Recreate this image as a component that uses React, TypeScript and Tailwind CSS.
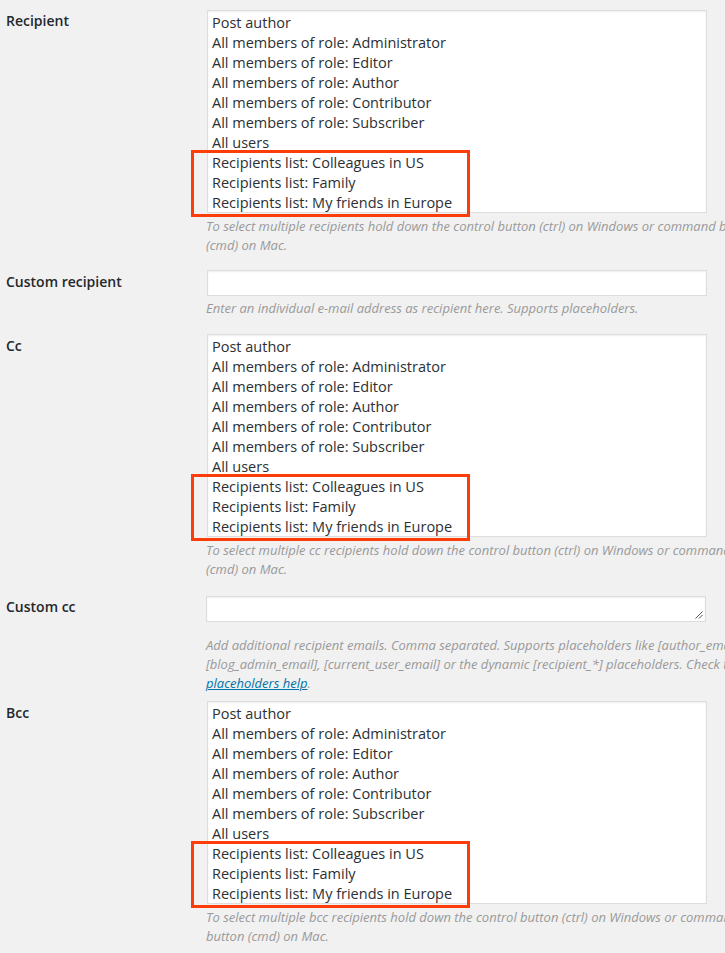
import React from "react";

const options = [
  "Post author",
  "All members of role: Administrator",
  "All members of role: Editor",
  "All members of role: Author",
  "All members of role: Contributor",
  "All members of role: Subscriber",
  "All users",
  "Recipients list: Colleagues in US",
  "Recipients list: Family",
  "Recipients list: My friends in Europe",
];

function Label({ children, pt }: { children: React.ReactNode; pt: string }) {
  return (
    <div className={`w-[206px] shrink-0 pl-[6px] font-semibold text-[14px] leading-[20px] text-[#23282d] ${pt}`}>
      {children}
    </div>
  );
}

function Help({ lines, className = "" }: { lines: React.ReactNode[]; className?: string }) {
  return (
    <div className={`italic text-[13px] leading-[19px] text-[#999999] whitespace-nowrap ${className}`}>
      {lines.map((l, i) => (
        <div key={i}>{l}</div>
      ))}
    </div>
  );
}

function RecipientSelect() {
  return (
    <div className="relative ml-[1px] w-[500px]">
      <div className="h-[203px] bg-white border border-[#dddddd] shadow-[inset_0_1px_2px_rgba(0,0,0,0.07)] pl-[4px] pt-[2px] text-[14.5px] leading-[20px] text-[#2c3034]">
        {options.map((o) => (
          <div key={o}>{o}</div>
        ))}
      </div>
      {/* highlight drawn over the recipients lists */}
      <div className="absolute left-[-16px] top-[140px] w-[279px] h-[67px] border-[3px] border-[#fc3d0a]" />
    </div>
  );
}

export default function App() {
  return (
    <div className="w-[725px] min-h-[953px] overflow-hidden bg-[#f1f1f1] font-['Open_Sans',sans-serif]">
      {/* Recipient */}
      <div className="flex pt-[10px]">
        <Label pt="pt-[1px]">Recipient</Label>
        <div>
          <RecipientSelect />
          <Help
            className="mt-[4px]"
            lines={[
              "To select multiple recipients hold down the control button (ctrl) on Windows or command button",
              "(cmd) on Mac.",
            ]}
          />
        </div>
      </div>

      {/* Custom recipient */}
      <div className="flex pt-[15px]">
        <Label pt="pt-[2px]">Custom recipient</Label>
        <div>
          <div className="ml-[1px] w-[500px] h-[26px] bg-white border border-[#dddddd] shadow-[inset_0_1px_2px_rgba(0,0,0,0.07)]" />
          <Help className="mt-[3px]" lines={["Enter an individual e-mail address as recipient here. Supports placeholders."]} />
        </div>
      </div>

      {/* Cc */}
      <div className="flex pt-[16px]">
        <Label pt="pt-[2px]">Cc</Label>
        <div>
          <RecipientSelect />
          <Help
            className="mt-[4px]"
            lines={[
              "To select multiple cc recipients hold down the control button (ctrl) on Windows or command button",
              "(cmd) on Mac.",
            ]}
          />
        </div>
      </div>

      {/* Custom cc */}
      <div className="flex pt-[17px]">
        <Label pt="pt-[1px]">Custom cc</Label>
        <div>
          <div className="relative w-[500px] h-[26px] bg-white border border-[#dddddd] shadow-[inset_0_1px_2px_rgba(0,0,0,0.07)]">
            <svg className="absolute right-[2px] bottom-[2px]" width="8" height="8" viewBox="0 0 8 8">
              <path d="M7.5 0.5L0.5 7.5M7.5 4L4 7.5" stroke="#555" strokeWidth="1" />
            </svg>
          </div>
          <Help
            className="mt-[14px]"
            lines={[
              "Add additional recipient emails. Comma separated. Supports placeholders like [author_email],",
              "[blog_admin_email], [current_user_email] or the dynamic [recipient_*] placeholders. Check the",
              <>
                <a href="#" className="underline text-[#0073aa]">placeholders help</a>.
              </>,
            ]}
          />
        </div>
      </div>

      {/* Bcc */}
      <div className="flex pt-[8px]">
        <Label pt="pt-[2px]">Bcc</Label>
        <div>
          <RecipientSelect />
          <Help
            className="mt-[4px]"
            lines={[
              "To select multiple bcc recipients hold down the control button (ctrl) on Windows or command",
              "button (cmd) on Mac.",
            ]}
          />
        </div>
      </div>
    </div>
  );
}
